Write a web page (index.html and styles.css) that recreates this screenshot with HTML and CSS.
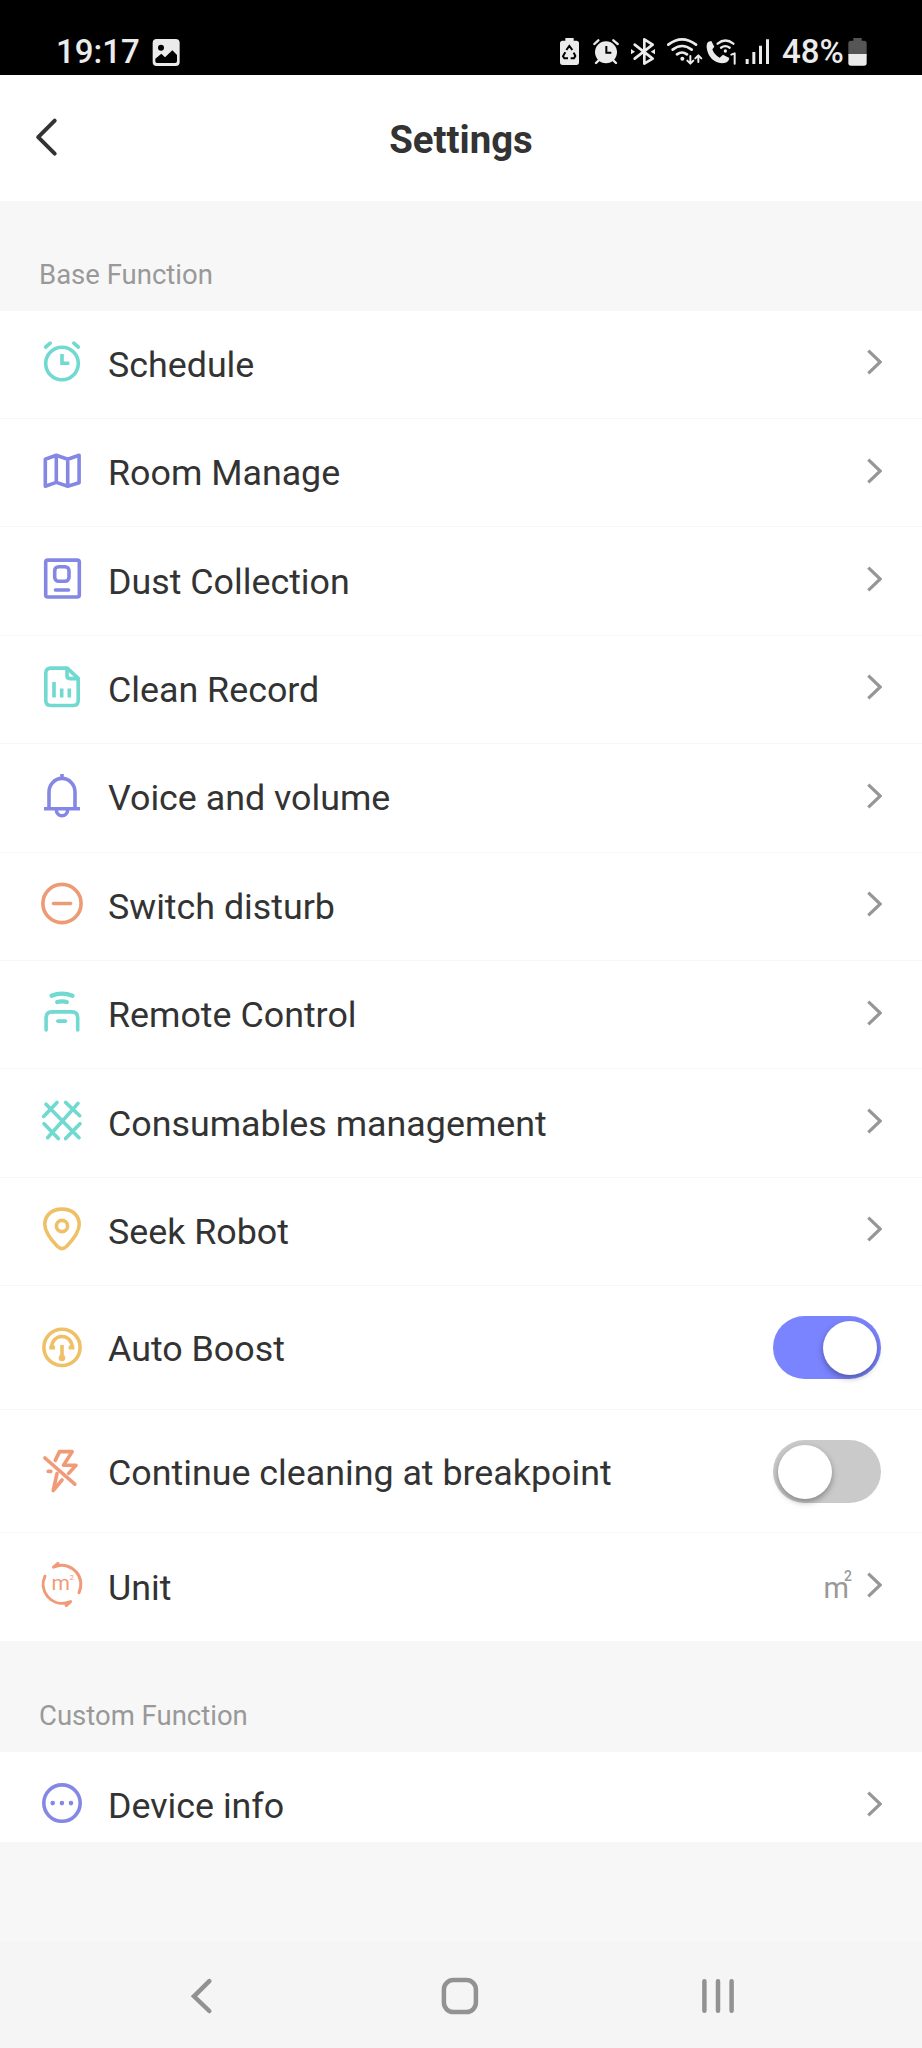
FILE: index.html
```html
<!DOCTYPE html>
<html lang="en">
<head>
    <title>Settings</title>
    <meta charset="UTF-8">
    <meta name="viewport" content="width=device-width, initial-scale=1.0">
    <link rel="stylesheet" href="styles.css">
</head>
<body>
    <svg class="defs" width="0" height="0">
        <symbol id="chevron" viewBox="0 0 16 28">
            <path d="M2.3 2.7L14.2 14L2.3 25.3" fill="none" stroke="#969696" stroke-width="3.2"/>
        </symbol>
    </svg>

    <!-- Phone status bar -->
    <div class="status-bar">
        <span class="time">19:17</span>
        <svg class="photo" width="28" height="32" viewBox="456 108 84 96">
            <path fill-rule="evenodd" d="M470 117H527Q539 117 539 129V186Q539 198 527 198H470Q458 198 458 186V129Q458 117 470 117ZM466 176V184Q466 189 471 189H525Q531 189 531 184V165L517 151L495 172L484 161ZM483 134A9 9 0 1 0 483 152A9 9 0 1 0 483 134Z"/>
        </svg>
        <div class="status-icons">
            <svg class="saver" width="20" height="32" viewBox="60 108 60 96">
                <path d="M76 114H101V122H109Q117 122 117 130V187Q117 195 109 195H68Q60 195 60 187V130Q60 122 68 122H76Z"/>
                <path class="cut" d="M79 150L88 138L97 150M101 158L106 168L102 175H92M84 175H73L69 169L76 157"/>
            </svg>
            <svg class="alarm" width="26" height="32" viewBox="159 108 78 96">
                <circle cx="198" cy="157" r="33"/>
                <path class="line" stroke-width="7" d="M163 132L175 121M233 132L220 121M176 181L168 189M220 181L228 189"/>
                <path class="cut" d="M199 138V158H214"/>
            </svg>
            <svg class="bluetooth" width="25" height="32" viewBox="273 108 75 96">
                <path class="line" stroke-width="8" d="M284 134L338 176L313 191V118L338 134L284 176"/>
                <path d="M273 147L285 155L273 163ZM345 147L332 155L345 163Z"/>
            </svg>
            <svg class="wifi" width="36" height="32" viewBox="381 108 108 96">
                <path class="line" stroke-width="8" d="M385 134Q426 102 468 134M398 149Q426 127 455 149M411 163Q426 152 441 163"/>
                <circle cx="427" cy="176" r="6"/>
                <path class="line" stroke-width="6" d="M451 168V190M442 182L451 191L460 182M475 186V167M466 175L475 166L484 175"/>
            </svg>
            <svg class="call" width="31" height="32" viewBox="498 108 93 96">
                <path d="M514 123L505 125Q499 130 500 143Q506 184 546 190Q561 190 566 181L568 174L549 164L539 173Q522 164 517 148L523 140Z"/>
                <path class="line" stroke-width="7" d="M533 131Q556 112 580 131M543 143Q556 134 569 143"/>
                <circle cx="556" cy="153" r="5"/>
                <path class="line" stroke-width="6" d="M574 164L584 160V191"/>
            </svg>
            <svg class="signal" width="25" height="32" viewBox="615 108 75 96">
                <path d="M617 177h9v15h-9zM637 156h9v36h-9zM657 137h9v55h-9zM678 118h9v74h-9z"/>
            </svg>
            <span class="percent">48%</span>
            <svg class="battery" width="20" height="32" viewBox="924 108 60 96">
                <path fill="#555" d="M940 114H965V122H972Q980 122 980 130V165H925V130Q925 122 933 122H940Z"/>
                <path d="M925 162H980V189Q980 197 972 197H933Q925 197 925 189Z"/>
            </svg>
        </div>
    </div>

    <header class="header">
        <svg class="back" width="24" height="40" viewBox="0 0 24 40">
            <path d="M19.7 3.6L3.2 20.2L19.7 36.6"/>
        </svg>
        <h1>Settings</h1>
    </header>

    <h2 class="section-title">Base Function</h2>
    <ul class="list">
        <li class="row">
            <svg class="icon teal" viewBox="0 0 44 44">
                <circle cx="22" cy="22.5" r="16.3"/>
                <path d="M5.7 6L10.2 2.2M33.8 2.2L38.3 6"/>
                <path class="butt" d="M22 13V22.3H29.3"/>
            </svg>
            <span class="label">Schedule</span>
            <svg class="chevron"><use href="#chevron"/></svg>
        </li>
        <li class="row">
            <svg class="icon purple" viewBox="0 0 44 44">
                <path d="M5.3 9.3L16.3 5.3L27.7 9.3L39.1 5.3V32.7L27.7 36.2L16.3 32.4L5.3 36.2ZM16.3 5.3V32.4M27.7 9.3V36.2"/>
            </svg>
            <span class="label">Room Manage</span>
            <svg class="chevron"><use href="#chevron"/></svg>
        </li>
        <li class="row">
            <svg class="icon purple" viewBox="0 0 44 44">
                <rect x="5.7" y="2.1" width="33.6" height="36.9" rx="2"/>
                <rect x="14.7" y="8.7" width="14.3" height="14.6" rx="4"/>
                <path d="M15.5 32H28.5"/>
            </svg>
            <span class="label">Dust Collection</span>
            <svg class="chevron"><use href="#chevron"/></svg>
        </li>
        <li class="row">
            <svg class="icon teal" viewBox="0 0 44 44">
                <path d="M10.8 2.1H27.2L38.2 12.4V34.5Q38.2 39.5 33.2 39.5H10.8Q5.8 39.5 5.8 34.5V7.1Q5.8 2.1 10.8 2.1ZM27 3V9.5Q27 12.6 30 12.6H38"/>
                <path class="butt" d="M14 16V31.6M21.7 22.6V31.6M29.3 22.6V31.6"/>
            </svg>
            <span class="label">Clean Record</span>
            <svg class="chevron"><use href="#chevron"/></svg>
        </li>
        <li class="row">
            <svg class="icon purple" viewBox="0 0 44 44">
                <path class="butt" d="M22 -1V4M9 33V17A13 13.6 0 0 1 35 17V33M4 33.7H40M16.4 35A5.6 5.8 0 0 0 27.6 35"/>
            </svg>
            <span class="label">Voice and volume</span>
            <svg class="chevron"><use href="#chevron"/></svg>
        </li>
        <li class="row">
            <svg class="icon orange" viewBox="0 0 44 44">
                <circle cx="22" cy="20.5" r="19.1"/>
                <path d="M13.5 20.5H30.5"/>
            </svg>
            <span class="label">Switch disturb</span>
            <svg class="chevron"><use href="#chevron"/></svg>
        </li>
        <li class="row">
            <svg class="icon teal" viewBox="0 0 44 44">
                <path d="M6.1 38V25.8Q6.1 19.9 12 19.9H31.8Q37.7 19.9 37.7 25.8V38M17.8 29.1H25.6"/>
                <path class="thick" d="M11.5 3.8Q22 -.4 32.5 3.8M17.2 10.1Q22 8.6 26.8 10.1"/>
            </svg>
            <span class="label">Remote Control</span>
            <svg class="chevron"><use href="#chevron"/></svg>
        </li>
        <li class="row">
            <svg class="icon teal" viewBox="0 0 44 44">
                <path d="M6 4.2L39 37.7M38 3.4L7.6 37.7M17 2.4L3.6 16.4M25.6 2.4L39.7 15.7M4 23.7L18.3 38.6M40 23.7L25.6 38.6"/>
            </svg>
            <span class="label">Consumables management</span>
            <svg class="chevron"><use href="#chevron"/></svg>
        </li>
        <li class="row">
            <svg class="icon yellow" viewBox="0 0 44 44">
                <path d="M22 1.1C11 1.1 4.8 8 4.8 16.5C4.8 24.5 12.8 33.6 17.3 38.3Q22 42.8 26.7 38.3C31.2 33.6 39.2 24.5 39.2 16.5C39.2 8 33 1.1 22 1.1Z"/>
                <circle cx="22" cy="18" r="5.6"/>
            </svg>
            <span class="label">Seek Robot</span>
            <svg class="chevron"><use href="#chevron"/></svg>
        </li>
        <li class="row tall">
            <svg class="icon yellow" viewBox="0 0 44 44">
                <circle cx="22" cy="23.4" r="18.1"/>
                <path class="butt" d="M9.3 23.6H15M28.6 23.6H34.4M11.6 24C11.6 8.6 32.2 8.6 32.2 24M22 21V33"/>
                <circle class="dot" cx="22" cy="34" r="3.3"/>
            </svg>
            <span class="label">Auto Boost</span>
            <span class="toggle on"></span>
        </li>
        <li class="row tall">
            <svg class="icon coral" viewBox="0 0 44 44">
                <path d="M4.9 10L34.8 36.2M15.3 12.4L19.5 3.6H32.2L23.5 17.3H36L28.7 25.4M8.2 23.4H10.8M17 25.6L13.2 42.6L22 32"/>
            </svg>
            <span class="label">Continue cleaning at breakpoint</span>
            <span class="toggle"></span>
        </li>
        <li class="row">
            <svg class="icon coral unit-icon" viewBox="0 0 44 44">
                <path d="M18 -.6L13.5 3.2L17 2A19 19 0 0 1 39 28.6M5 12.2A19 19 0 0 0 26.7 38.8L30.6 37.6L26.2 41.6"/>
                <text x="11.4" y="26.4" font-size="21">m</text>
                <text x="29.6" y="16.3" font-size="8">2</text>
            </svg>
            <span class="label">Unit</span>
            <span class="value">m<sup>2</sup></span>
            <svg class="chevron"><use href="#chevron"/></svg>
        </li>
    </ul>

    <h2 class="section-title custom">Custom Function</h2>
    <ul class="list short">
        <li class="row">
            <svg class="icon purple" viewBox="0 0 44 44">
                <circle cx="22" cy="20.1" r="18.2"/>
                <circle class="dot" cx="12.7" cy="20.1" r="2.3"/>
                <circle class="dot" cx="21.9" cy="20.1" r="2.3"/>
                <circle class="dot" cx="31" cy="20.1" r="2.3"/>
            </svg>
            <span class="label">Device info</span>
            <svg class="chevron"><use href="#chevron"/></svg>
        </li>
    </ul>

    <!-- Android navigation buttons -->
    <nav class="nav-bar">
        <svg width="36" height="40" viewBox="0 0 36 40">
            <path d="M26.3 5.2L11 20.3L26.3 35"/>
        </svg>
        <svg width="40" height="40" viewBox="0 0 40 40">
            <rect x="3.9" y="4.1" width="32" height="32" rx="9.5"/>
        </svg>
        <svg width="36" height="40" viewBox="0 0 36 40">
            <path d="M4.4 5.3V34.7M18 5.3V34.7M31.6 5.3V34.7"/>
        </svg>
    </nav>
</body>
</html>
```

FILE: styles.css
```css
* {
    margin: 0;
    padding: 0;
    box-sizing: border-box;
}

body {
    width: 922px;
    height: 2048px;
    display: flex;
    flex-direction: column;
    font-family: Roboto, "Liberation Sans", sans-serif;
    background-color: #f7f7f7;
    color: #333;
    overflow: hidden;
}

svg {
    display: block;
    flex-shrink: 0;
}

.defs {
    position: absolute;
}

/* Status bar */
.status-bar {
    height: 75px;
    flex-shrink: 0;
    display: flex;
    align-items: flex-end;
    padding: 0 54px 7px 56px;
    background-color: #000;
    color: #ebebeb;
    font-size: 33px;
    font-weight: 500;
    line-height: 32px;
}

.status-bar svg {
    fill: #ebebeb;
}

.status-bar .line {
    fill: none;
    stroke: #ebebeb;
    stroke-linecap: round;
    stroke-linejoin: round;
}

.status-bar .cut {
    fill: none;
    stroke: #000;
    stroke-width: 6;
}

.time {
    width: 96px;
}

.status-icons {
    display: flex;
    margin-left: auto;
}

.alarm {
    margin-left: 13px;
}

.bluetooth {
    margin-left: 12px;
}

.wifi {
    margin-left: 11px;
}

.call {
    margin-left: 3px;
}

.signal {
    margin-left: 8px;
}

.percent {
    width: 66px;
    margin-left: 12px;
    white-space: nowrap;
}

/* Header */
.header {
    height: 126px;
    flex-shrink: 0;
    display: flex;
    align-items: center;
    padding: 0 35px 2px;
    background-color: #fff;
}

.back {
    fill: none;
    stroke: #333;
    stroke-width: 4;
    stroke-linecap: round;
    stroke-linejoin: round;
}

.header h1 {
    flex: 1;
    padding: 4px 24px 0 0;
    font-size: 38.4px;
    font-weight: 700;
    text-align: center;
}

/* Lists */
.section-title {
    height: 109.6px;
    flex-shrink: 0;
    padding: 58px 39px 0;
    font-size: 27.5px;
    font-weight: 400;
    line-height: 32px;
    color: #999;
}

.section-title.custom {
    height: 110.4px;
}

.list {
    flex-shrink: 0;
    list-style: none;
    background-color: #fff;
}

.list.short {
    height: 90px;
    overflow: hidden;
}

.row {
    height: 108.4px;
    display: flex;
    align-items: center;
    padding: 0 41px 2px 40px;
    border-bottom: 1px solid #f7f7f7;
}

.row.tall {
    height: 123.7px;
}

.icon {
    width: 44px;
    height: 44px;
    margin-right: 24px;
    overflow: visible;
    fill: none;
    stroke: currentColor;
    stroke-width: 3.6;
    stroke-linecap: round;
    stroke-linejoin: round;
}

.icon .butt {
    stroke-linecap: butt;
    stroke-linejoin: miter;
}

.icon .thick {
    stroke-width: 4.2;
}

.icon .dot,
.icon text {
    fill: currentColor;
    stroke: none;
}

.teal {
    color: #70d9d0;
}

.purple {
    color: #8488e4;
}

.orange {
    color: #ec9b74;
}

.coral {
    color: #f19a78;
}

.yellow {
    color: #efc068;
}

.unit-icon {
    stroke-width: 3;
}

.label {
    flex: 1;
    padding-top: 3px;
    font-size: 35.8px;
    line-height: 40px;
}

.tall .label {
    padding-top: 6px;
}

.chevron {
    width: 16px;
    height: 28px;
    margin: 0 -1px 2px 0;
}

.value {
    margin-right: 14px;
    padding-top: 4px;
    font-size: 29px;
    line-height: 40px;
    color: #999;
}

.value sup {
    display: inline-block;
    margin-left: -5px;
    font-size: 14px;
    font-weight: 500;
    line-height: 13px;
    vertical-align: 17px;
}

.toggle {
    width: 108px;
    height: 63px;
    display: flex;
    padding: 4.5px;
    margin-top: 3px;
    border-radius: 32px;
    background-color: #cacaca;
}

.toggle::after {
    content: "";
    width: 54px;
    height: 54px;
    border-radius: 50%;
    background-color: #fff;
    box-shadow: 0 3px 6px rgba(0, 0, 0, 0.35);
}

.toggle.on {
    justify-content: flex-end;
    background-color: #7a84ff;
}

/* Bottom navigation */
.nav-bar {
    height: 107px;
    flex-shrink: 0;
    display: flex;
    align-items: center;
    justify-content: space-between;
    margin-top: auto;
    padding: 2px 186px 0 183px;
    background-color: #f5f5f5;
}

.nav-bar svg {
    fill: none;
    stroke: #929292;
    stroke-width: 4.5;
    stroke-linecap: round;
}
```
